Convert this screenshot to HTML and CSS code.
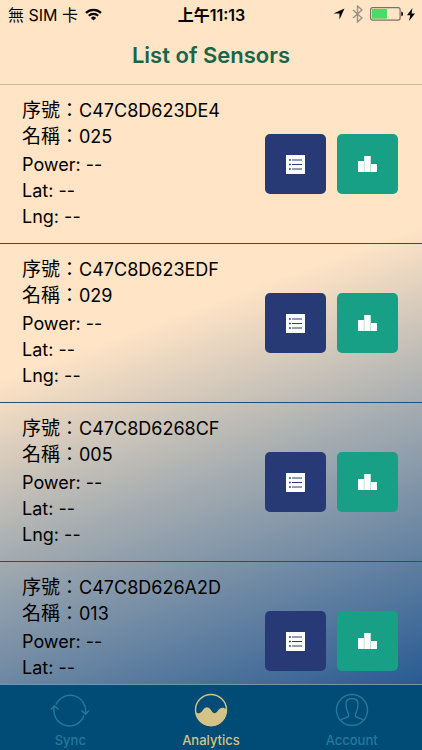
FILE: index.html
```html
<!DOCTYPE html>
<html lang="zh-Hant">
<head>
  <meta charset="UTF-8">
  <meta name="viewport" content="width=device-width, initial-scale=1.0">
  <title>List of Sensors</title>
  <link rel="stylesheet" href="styles.css">
</head>
<body>
  <!-- Shared icons -->
  <svg class="sprite" aria-hidden="true">
    <symbol id="icon-list" viewBox="0 0 19 19">
      <path fill="#fff" d="M0 0h19v19H0z"/>
      <path stroke="#273a75" stroke-width="1" d="M6 5h10M6 9.500h10M6 14h10"/>
      <path stroke="#273a75" stroke-width="1.500" d="M3 5h1.800M3 9.500h1.800M3 14h1.800"/>
    </symbol>
    <symbol id="icon-chart" viewBox="0 0 19 19">
      <path fill="#fff" d="M0 6h5.900v11H0zM6.200 1h6.500v16H6.200zM13 9h6v8h-6z"/>
    </symbol>
  </svg>

  <header class="header">
    <div class="status-bar">
      <div class="status-left">
        <span>無 SIM 卡</span>
        <svg width="17" height="13" viewBox="0 0 17 13" fill="none" stroke="#000" stroke-width="2.200">
          <path d="M1 4.900a10.600 10.600 0 0 1 15 0M3.800 7.800a6.600 6.600 0 0 1 9.400 0"/>
          <path d="M8.500 12.500 5.900 9.900a3.700 3.700 0 0 1 5.200 0z" fill="#000" stroke="none"/>
        </svg>
      </div>
      <strong class="status-time">上午11:13</strong>
      <div class="status-right">
        <svg width="12" height="12" viewBox="0 0 13 13"><path d="M12.500.5 7 12.500V6H.5z"/></svg>
        <svg width="11" height="18" viewBox="0 0 11 18" fill="none" stroke="#9b9084" stroke-width="1.400"><path d="m1 5 9 8-4.500 4V1L10 5l-9 8"/></svg>
        <div class="battery">
          <svg width="34" height="14" viewBox="0 0 34 14">
            <rect x=".6" y=".6" width="29.500" height="12.500" rx="2" fill="none" stroke="#7d7062" stroke-width="1.200"/>
            <path fill="#4cd964" d="M2 2h15v9.700H2z"/>
            <path d="M31.300 4.500c2.300.5 2.300 4.300 0 4.800z"/>
          </svg>
          <svg width="8" height="13" viewBox="0 0 8 13"><path d="M5.500 0 0 7.200h3.300L2 13l6-7.500H4.500z"/></svg>
        </div>
      </div>
    </div>
    <h1 class="title">List of Sensors</h1>
  </header>

  <main class="sensor-list">
    <article class="sensor">
      <div class="sensor-info">
        <p><span>序號：</span>C47C8D623DE4<br><span>名稱：</span>025</p>
        <p>Power: --<br>Lat: --<br>Lng: --</p>
      </div>
      <div class="sensor-actions">
        <button class="details" aria-label="Details"><svg><use href="#icon-list"/></svg></button>
        <button class="chart" aria-label="Chart"><svg><use href="#icon-chart"/></svg></button>
      </div>
    </article>
    <article class="sensor">
      <div class="sensor-info">
        <p><span>序號：</span>C47C8D623EDF<br><span>名稱：</span>029</p>
        <p>Power: --<br>Lat: --<br>Lng: --</p>
      </div>
      <div class="sensor-actions">
        <button class="details" aria-label="Details"><svg><use href="#icon-list"/></svg></button>
        <button class="chart" aria-label="Chart"><svg><use href="#icon-chart"/></svg></button>
      </div>
    </article>
    <article class="sensor">
      <div class="sensor-info">
        <p><span>序號：</span>C47C8D6268CF<br><span>名稱：</span>005</p>
        <p>Power: --<br>Lat: --<br>Lng: --</p>
      </div>
      <div class="sensor-actions">
        <button class="details" aria-label="Details"><svg><use href="#icon-list"/></svg></button>
        <button class="chart" aria-label="Chart"><svg><use href="#icon-chart"/></svg></button>
      </div>
    </article>
    <article class="sensor">
      <div class="sensor-info">
        <p><span>序號：</span>C47C8D626A2D<br><span>名稱：</span>013</p>
        <p>Power: --<br>Lat: --<br>Lng: --</p>
      </div>
      <div class="sensor-actions">
        <button class="details" aria-label="Details"><svg><use href="#icon-list"/></svg></button>
        <button class="chart" aria-label="Chart"><svg><use href="#icon-chart"/></svg></button>
      </div>
    </article>
  </main>

  <nav class="tab-bar">
    <a class="tab" href="#sync">
      <svg width="40" height="34" viewBox="0 0 40 34" fill="none" stroke="currentColor" stroke-width="1.400">
        <path d="M6 11.500A15.500 15.500 0 0 1 35.500 20M34 22.500A15.500 15.500 0 0 1 4.500 13"/>
        <path d="m31.500 17.500 4 3.800 3.500-3.800M1 16.500l3.500-3.800 4 3.800"/>
      </svg>
      <span>Sync</span>
    </a>
    <a class="tab active" href="#analytics">
      <svg width="34" height="34" viewBox="0 0 34 34">
        <circle cx="17" cy="17" r="15.500" fill="none" stroke="currentColor" stroke-width="1.400"/>
        <path fill="currentColor" d="M1.500 19c3.500 2.500 5.500 1 7.500-2 2.500-3.800 5.500-3.500 8 0 2.500 4 4 4.500 7 .5 2.500-3.300 5.500-3.800 8.500-1A15.500 15.500 0 0 1 1.500 19z"/>
      </svg>
      <span>Analytics</span>
    </a>
    <a class="tab" href="#account">
      <svg width="34" height="34" viewBox="0 0 34 34" fill="none" stroke="currentColor" stroke-width="1.400">
        <circle cx="17" cy="17" r="15.500"/>
        <path d="M5.500 27.500c1.500-2.500 7.500-2.200 8-4.500.3-1.500-.2-3-1-4.500C11.500 16.500 11 14 11 11c0-3.500 2.500-5.500 6-5.500s6 2 6 5.500c0 3-.5 5.500-1.500 7.500-.8 1.500-1.300 3-1 4.500.5 2.300 6.500 2 8 4.500"/>
      </svg>
      <span>Account</span>
    </a>
  </nav>
</body>
</html>
```

FILE: styles.css
```css
* {
  box-sizing: border-box;
}

body {
  margin: 0;
  height: 100vh;
  display: flex;
  flex-direction: column;
  overflow: hidden;
  font-family: Inter, "Noto Sans CJK TC", sans-serif;
  color: #000;
  background: linear-gradient(160deg, #ffe4c6 42%, #a8aeb1 61%, #275a93 93%);
}

svg {
  display: block;
}

.sprite {
  display: none;
}

/* Header */
.header {
  border-bottom: 1px solid #cdb6a0;
}

.status-bar {
  display: grid;
  grid-template-columns: 1fr auto 1fr;
  align-items: center;
  height: 28px;
  padding: 0 7px 0 8px;
  font-size: 16px;
}

.status-left,
.status-right,
.battery {
  display: flex;
  align-items: center;
  gap: 7px;
}

.status-right {
  justify-content: flex-end;
}

.battery {
  gap: 3px;
}

.status-time {
  font-weight: 600;
}

.title {
  margin: 0;
  height: 56px;
  line-height: 54px;
  text-align: center;
  font-size: 22px;
  font-weight: 600;
  color: #18654a;
}

/* Sensor list, scrolls between header and tabs */
.sensor-list {
  flex: 1;
  min-height: 0;
  overflow-y: auto;
  scrollbar-width: none;
}

.sensor {
  display: flex;
  justify-content: space-between;
  align-items: center;
  padding: 13px 24px 13px 22px;
  border-bottom: 1px solid #1d4f86;
}

.sensor-info {
  display: grid;
  gap: 2px;
  font-size: 18px;
  line-height: 26px;
}

.sensor-info p {
  margin: 0;
}

.sensor-info span {
  font-size: 19px;
  line-height: 1;
}

.sensor-actions {
  display: flex;
  gap: 11px;
}

.sensor-actions button {
  display: flex;
  justify-content: center;
  align-items: center;
  width: 61px;
  height: 60px;
  padding: 0;
  border: none;
  border-radius: 5px;
  cursor: pointer;
}

.sensor-actions svg {
  width: 19px;
  height: 19px;
}

.details {
  background-color: #273a75;
}

.chart {
  background-color: #18a086;
}

/* Bottom tabs */
.tab-bar {
  display: grid;
  grid-template-columns: repeat(3, 1fr);
  border-top: 1px solid #6f96ac;
  background-color: #004c76;
}

.tab {
  display: flex;
  flex-direction: column;
  align-items: center;
  gap: 4px;
  padding: 8px 0 1px;
  font-size: 13px;
  line-height: 18px;
  font-weight: 500;
  color: #24799e;
  text-decoration: none;
}

.tab.active {
  color: #d3c387;
}
```
